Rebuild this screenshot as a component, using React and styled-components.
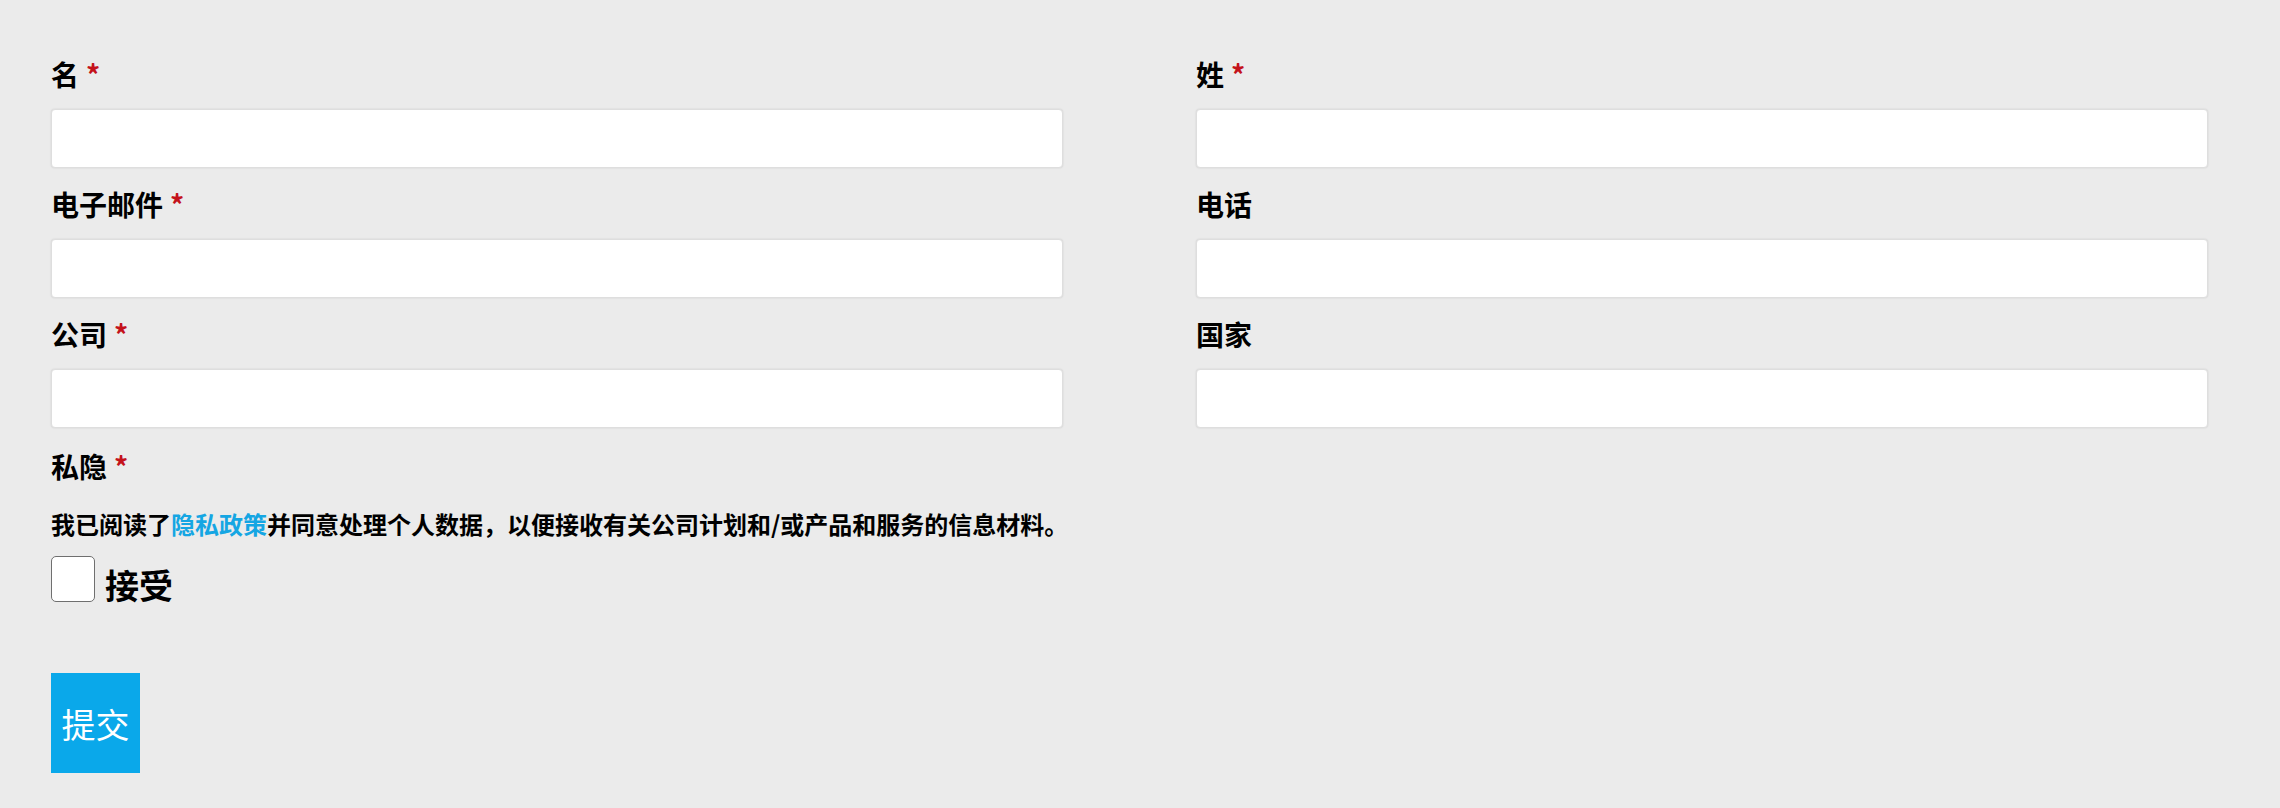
import React from 'react'
import styled, { createGlobalStyle } from 'styled-components'

// Global page styles
const GlobalStyle = createGlobalStyle`
  body {
    margin: 0;
    background: #ebebeb;
    font-family: "Noto Sans CJK SC", "Noto Sans", sans-serif;
    color: #000;
  }
`

const fields = [
  { label: '名', required: true },
  { label: '姓', required: true },
  { label: '电子邮件', required: true },
  { label: '电话', required: false },
  { label: '公司', required: true },
  { label: '国家', required: false },
]

const App = () => {
  return (
    <>
      <GlobalStyle />
      <Form onSubmit={(e) => e.preventDefault()}>
        <Grid>
          {fields.map((f) => (
            <Field key={f.label}>
              <Label>
                {f.label}
                {f.required && <Required>*</Required>}
              </Label>
              <TextInput type="text" />
            </Field>
          ))}
        </Grid>

        <Privacy>
          <Label>
            私隐<Required>*</Required>
          </Label>
          <Notice>
            我已阅读了<PolicyLink href="#">隐私政策</PolicyLink>并同意处理个人数据，以便接收有关公司计划和/或产品和服务的信息材料。
          </Notice>
          <CheckRow>
            <Checkbox type="checkbox" id="accept" />
            <AcceptText htmlFor="accept">接受</AcceptText>
          </CheckRow>
        </Privacy>

        <SubmitButton type="submit">提交</SubmitButton>
      </Form>
    </>
  )
}

// Style components

const Form = styled.form`
  padding: 57px 72px 35px 51px;
`

const Grid = styled.div`
  display: grid;
  grid-template-columns: 1fr 1fr;
  column-gap: 133px;
  row-gap: 19px;
`

const Field = styled.div`
  display: flex;
  flex-direction: column;
`

const Label = styled.label`
  display: block;
  font-size: 28px;
  line-height: 34px;
  font-weight: 700;
  margin-bottom: 18px;
`

const Required = styled.span`
  color: #c4121b;
  margin-left: 7px;
`

const TextInput = styled.input`
  box-sizing: border-box;
  width: 100%;
  height: 59px;
  background: #fff;
  border: 1px solid #dedede;
  border-radius: 4px;
  box-shadow: 0 0 2px rgba(0, 0, 0, 0.12);
  outline: none;
`

const Privacy = styled.div`
  margin-top: 21px;

  ${Label} {
    margin-bottom: 25px;
  }
`

const Notice = styled.p`
  margin: 0 0 16px;
  font-size: 24px;
  line-height: 32px;
  font-weight: 700;
`

const PolicyLink = styled.a`
  color: #15a6e3;
  text-decoration: none;
`

const CheckRow = styled.div`
  display: flex;
  align-items: flex-end;
`

const Checkbox = styled.input`
  appearance: none;
  margin: 0;
  width: 44px;
  height: 46px;
  background: #fff;
  border: 1px solid #6f6f6f;
  border-radius: 5px;
`

const AcceptText = styled.label`
  margin-left: 10px;
  font-size: 34px;
  line-height: 34px;
  font-weight: 700;
`

const SubmitButton = styled.button`
  display: block;
  margin-top: 71px;
  width: 89px;
  height: 100px;
  padding: 0;
  border: none;
  background: #0aa8ea;
  color: #fff;
  font-family: "Noto Sans CJK SC", sans-serif;
  font-size: 34px;
  font-weight: 400;
`

export default App
